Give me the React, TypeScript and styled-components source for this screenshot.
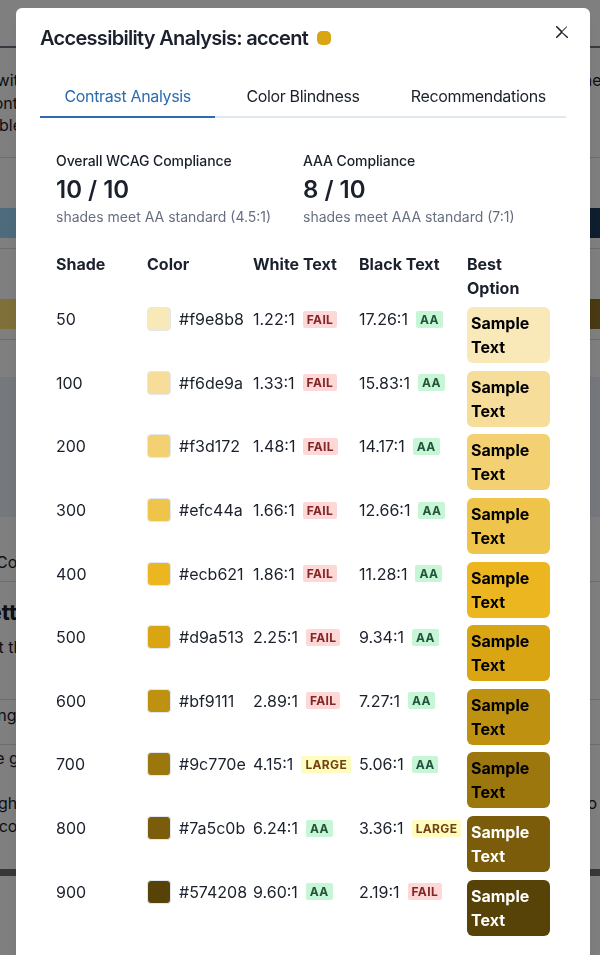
import React from 'react'
import styled, { createGlobalStyle } from 'styled-components'

type Level = 'fail' | 'aa' | 'large'

interface ShadeRow {
  shade: string
  hex: string
  onWhite: string
  whiteLevel: Level
  onBlack: string
  blackLevel: Level
  lightText?: boolean
}

const shades: ShadeRow[] = [
  { shade: '50', hex: '#f9e8b8', onWhite: '1.22:1', whiteLevel: 'fail', onBlack: '17.26:1', blackLevel: 'aa' },
  { shade: '100', hex: '#f6de9a', onWhite: '1.33:1', whiteLevel: 'fail', onBlack: '15.83:1', blackLevel: 'aa' },
  { shade: '200', hex: '#f3d172', onWhite: '1.48:1', whiteLevel: 'fail', onBlack: '14.17:1', blackLevel: 'aa' },
  { shade: '300', hex: '#efc44a', onWhite: '1.66:1', whiteLevel: 'fail', onBlack: '12.66:1', blackLevel: 'aa' },
  { shade: '400', hex: '#ecb621', onWhite: '1.86:1', whiteLevel: 'fail', onBlack: '11.28:1', blackLevel: 'aa' },
  { shade: '500', hex: '#d9a513', onWhite: '2.25:1', whiteLevel: 'fail', onBlack: '9.34:1', blackLevel: 'aa' },
  { shade: '600', hex: '#bf9111', onWhite: '2.89:1', whiteLevel: 'fail', onBlack: '7.27:1', blackLevel: 'aa' },
  { shade: '700', hex: '#9c770e', onWhite: '4.15:1', whiteLevel: 'large', onBlack: '5.06:1', blackLevel: 'aa' },
  { shade: '800', hex: '#7a5c0b', onWhite: '6.24:1', whiteLevel: 'aa', onBlack: '3.36:1', blackLevel: 'large', lightText: true },
  { shade: '900', hex: '#574208', onWhite: '9.60:1', whiteLevel: 'aa', onBlack: '2.19:1', blackLevel: 'fail', lightText: true },
]

const badgeTheme: Record<Level, { bg: string; fg: string; label: string }> = {
  fail: { bg: '#fed7d7', fg: '#822727', label: 'Fail' },
  aa: { bg: '#c6f6d5', fg: '#22543d', label: 'AA' },
  large: { bg: '#fefcbf', fg: '#744210', label: 'Large' },
}

const GlobalStyle = createGlobalStyle`
  * { box-sizing: border-box; }
  html, body {
    margin: 0;
    padding: 0;
    height: 955px;
    overflow: hidden;
  }
  body {
    font-family: Inter, "Noto Sans", "Liberation Sans", sans-serif;
    color: #1a202c;
    background: #fff;
  }
`

// background page (mostly hidden by the modal)
const Page = styled.div`
  position: relative;
  height: 955px;
  overflow: hidden;
  background: #fff;
`

const TopBar = styled.header`
  height: 48px;
  border-bottom: 2px solid #6b7280;
`

const Content = styled.main`
  margin: 0 -44px;
  font-size: 16px;
  line-height: 22.5px;
  color: #1a202c;
`

const Intro = styled.p`
  margin: 0;
  padding: 21px 0 20px;
  border-bottom: 1px solid #d2d8e0;
`

const PaletteCard = styled.section`
  padding: 50px 0 10px;
  border-bottom: 1px solid #d2d8e0;
`

const Strip = styled.div<{ $from: string; $to: string }>`
  height: 30px;
  background: linear-gradient(90deg, ${({ $from }) => $from} 0 8%, ${({ $to }) => $to} 92% 100%);
`

const PreviewPanel = styled.div`
  height: 140px;
  margin-top: 37px;
  background: #eaf2fb;
`

const ToolRow = styled.div`
  padding: 34px 0 8px 40px;
  border-bottom: 1px solid #d2d8e0;
`

const PageHeading = styled.h2`
  margin: 16px 0 0;
  font-size: 22px;
  line-height: 28px;
  font-weight: 700;
`

const PageText = styled.p`
  margin: 10px 0 0;
  padding-bottom: 40px;
  border-bottom: 1px solid #d2d8e0;
`

const SettingRow = styled.div`
  padding: 4px 0 18px;
  border-bottom: 1px solid #d2d8e0;
`

const Guidelines = styled.div`
  padding-top: 2px;
  height: 124px;
`

const ScrollBar = styled.div`
  height: 7px;
  background: #6f6f6f;
`

// modal
const Overlay = styled.div`
  position: fixed;
  inset: 0;
  background: rgba(0, 0, 0, 0.5);
  display: flex;
  align-items: flex-start;
  padding: 8px 0 0 16px;
`

const Modal = styled.div`
  position: relative;
  width: 574px;
  min-height: 1000px;
  background: #fff;
  border-radius: 6px;
  box-shadow: 0 10px 15px -3px rgba(0, 0, 0, 0.1), 0 4px 6px -2px rgba(0, 0, 0, 0.05);
`

const Header = styled.div`
  display: flex;
  align-items: center;
  gap: 9px;
  padding: 16px 24px;
`

const Title = styled.h2`
  margin: 0;
  font-size: 20px;
  line-height: 28px;
  font-weight: 600;
  letter-spacing: -0.7px;
  color: #1a202c;
`

const Dot = styled.span<{ $color: string }>`
  width: 14px;
  height: 14px;
  border-radius: 5px;
  background: ${({ $color }) => $color};
`

const CloseButton = styled.button`
  position: absolute;
  top: 8px;
  right: 12px;
  width: 32px;
  height: 32px;
  display: flex;
  align-items: center;
  justify-content: center;
  border: none;
  background: transparent;
  color: #1a202c;
  padding: 0;
  border-radius: 6px;
  cursor: pointer;
`

const Body = styled.div`
  padding: 8px 24px;
`

const TabList = styled.div`
  display: grid;
  grid-template-columns: repeat(3, 1fr);
  border-bottom: 2px solid #e2e8f0;
`

const Tab = styled.button<{ $active?: boolean }>`
  font-family: inherit;
  font-size: 16px;
  line-height: 24px;
  letter-spacing: -0.35px;
  padding: 8px 16px;
  margin-bottom: -2px;
  background: none;
  border: none;
  border-bottom: 2px solid ${({ $active }) => ($active ? '#2b6cb0' : 'transparent')};
  color: ${({ $active }) => ($active ? '#2b6cb0' : '#1a202c')};
  cursor: pointer;
`

const Panel = styled.div`
  padding: 16px;
`

const StatsGrid = styled.div`
  display: grid;
  grid-template-columns: 1fr 1fr;
  margin-top: 17px;
`

const StatLabel = styled.div`
  font-size: 14px;
  line-height: 20px;
  font-weight: 500;
  letter-spacing: -0.1px;
`

const StatNumber = styled.div`
  font-size: 24px;
  line-height: 36px;
  font-weight: 600;
  padding-top: 1px;
  margin-bottom: -1px;
`

const StatHelp = styled.div`
  font-size: 14px;
  line-height: 20px;
  color: #4a5568;
  opacity: 0.85;
`

const columns = '91px 106px 106px 108px 83px'

const HeadRow = styled.div`
  display: grid;
  grid-template-columns: ${columns};
  margin-top: 21.5px;
  padding: 3.5px 0;
  font-size: 16px;
  line-height: 24px;
  font-weight: 700;
  color: #1a202c;
`

const Row = styled.div`
  display: grid;
  grid-template-columns: ${columns};
  align-items: start;
  padding: 3.8px 0;
  font-size: 16px;
  line-height: 24px;
  color: #1a202c;
`

const Cell = styled.div`
  display: flex;
  align-items: center;
  gap: 8px;
  height: 24px;
  white-space: nowrap;
`

const Swatch = styled.span<{ $color: string }>`
  width: 24px;
  height: 24px;
  flex: none;
  border-radius: 4px;
  border: 1px solid #e2e8f0;
  background: ${({ $color }) => $color};
`

const Badge = styled.span<{ $level: Level }>`
  display: inline-block;
  padding: 0 4px;
  font-size: 12px;
  line-height: 17px;
  font-weight: 700;
  text-transform: uppercase;
  letter-spacing: 0.03em;
  border-radius: 2px;
  background: ${({ $level }) => badgeTheme[$level].bg};
  color: ${({ $level }) => badgeTheme[$level].fg};
`

const SampleBox = styled.div<{ $bg: string; $light?: boolean }>`
  padding: 4px;
  border-radius: 6px;
  font-weight: 700;
  line-height: 24px;
  background: ${({ $bg }) => $bg};
  color: ${({ $light }) => ($light ? '#ffffff' : '#000000')};
`

function CloseIcon() {
  return (
    <svg width="12" height="12" viewBox="0 0 24 24" aria-hidden="true">
      <path
        fill="currentColor"
        d="M.439,21.44a1.5,1.5,0,0,0,2.122,2.121L11.823,14.3a.25.25,0,0,1,.354,0l9.262,9.263a1.5,1.5,0,1,0,2.122-2.121L12.3,12.177a.25.25,0,0,1,0-.354l9.263-9.262A1.5,1.5,0,0,0,21.439.44L12.177,9.7a.25.25,0,0,1-.354,0L2.561.44A1.5,1.5,0,0,0,.439,2.561L9.7,11.823a.25.25,0,0,1,0,.354Z"
      />
    </svg>
  )
}

function BackgroundPage() {
  return (
    <Page>
      <TopBar />
      <Content>
        <Intro>
          Start with your brand color and the generator builds a full palette of shades for it. Check
          the contrast of each shade against light and dark text, then adjust it to improve how readable
          your colors are.
        </Intro>
        <PaletteCard>
          <Strip $from="#9cd6fc" $to="#1e3c5c" />
        </PaletteCard>
        <PaletteCard>
          <Strip $from="#ffe074" $to="#937424" />
        </PaletteCard>
        <PreviewPanel />
        <ToolRow>Compare Colors</ToolRow>
        <PageHeading>Palette Settings</PageHeading>
        <PageText>Adjust the saturation and lightness curve for each of the palette colors below.</PageText>
        <SettingRow>Lighting mode</SettingRow>
        <Guidelines>
          Usage guidelines
          <br />
          <br />
          Use lighter shades for backgrounds and darker shades for text, icons and borders so that
          color contrast stays accessible.
        </Guidelines>
        <ScrollBar />
      </Content>
    </Page>
  )
}

export default function App() {
  return (
    <>
      <GlobalStyle />
      <BackgroundPage />
      <Overlay>
        <Modal role="dialog" aria-label="Accessibility Analysis">
          <Header>
            <Title>Accessibility Analysis: accent</Title>
            <Dot $color="#d9a513" />
          </Header>
          <CloseButton aria-label="Close">
            <CloseIcon />
          </CloseButton>
          <Body>
            <TabList>
              <Tab $active>Contrast Analysis</Tab>
              <Tab>Color Blindness</Tab>
              <Tab>Recommendations</Tab>
            </TabList>
            <Panel>
              <StatsGrid>
                <div>
                  <StatLabel>Overall WCAG Compliance</StatLabel>
                  <StatNumber>10 / 10</StatNumber>
                  <StatHelp>shades meet AA standard (4.5:1)</StatHelp>
                </div>
                <div>
                  <StatLabel>AAA Compliance</StatLabel>
                  <StatNumber>8 / 10</StatNumber>
                  <StatHelp>shades meet AAA standard (7:1)</StatHelp>
                </div>
              </StatsGrid>

              <HeadRow>
                <div>Shade</div>
                <div>Color</div>
                <div>White Text</div>
                <div>Black Text</div>
                <div>Best Option</div>
              </HeadRow>

              {shades.map((s) => (
                <Row key={s.shade}>
                  <Cell>{s.shade}</Cell>
                  <Cell>
                    <Swatch $color={s.hex} />
                    {s.hex}
                  </Cell>
                  <Cell>
                    {s.onWhite}
                    <Badge $level={s.whiteLevel}>{badgeTheme[s.whiteLevel].label}</Badge>
                  </Cell>
                  <Cell>
                    {s.onBlack}
                    <Badge $level={s.blackLevel}>{badgeTheme[s.blackLevel].label}</Badge>
                  </Cell>
                  <SampleBox $bg={s.hex} $light={s.lightText}>
                    Sample Text
                  </SampleBox>
                </Row>
              ))}
            </Panel>
          </Body>
        </Modal>
      </Overlay>
    </>
  )
}
